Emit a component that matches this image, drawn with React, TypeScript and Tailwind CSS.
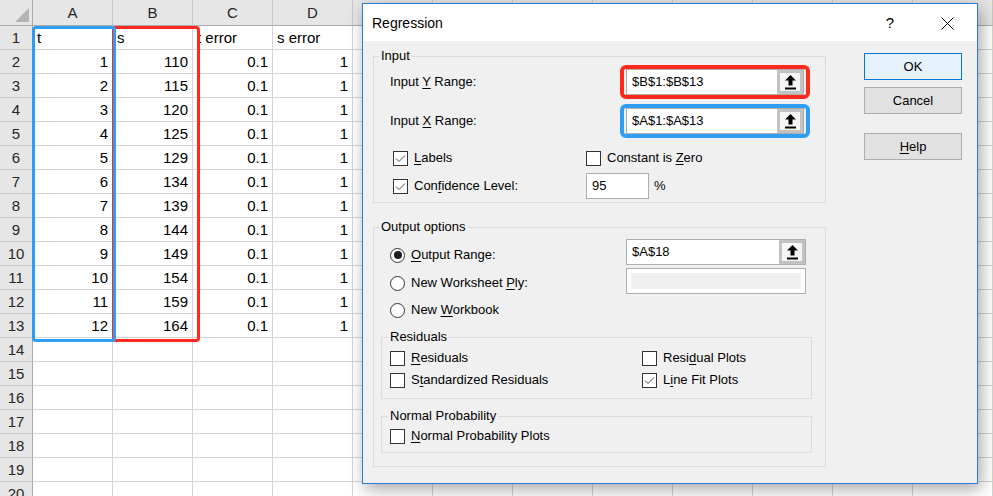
import type { ReactNode } from 'react';

const COLS = ['A', 'B', 'C', 'D', 'E', 'F', 'G', 'H', 'I', 'J', 'K', 'L'];

const sValues = [110, 115, 120, 125, 129, 134, 139, 144, 149, 154, 159, 164];

// cell contents per row (only A-D have data)
function cellsFor(row: number): { text: string; right: boolean }[] {
  if (row === 1) {
    return [
      { text: 't', right: false },
      { text: 's', right: false },
      { text: 't error', right: false },
      { text: 's error', right: false },
    ];
  }
  if (row >= 2 && row <= 13) {
    return [
      { text: String(row - 1), right: true },
      { text: String(sValues[row - 2]), right: true },
      { text: '0.1', right: true },
      { text: '1', right: true },
    ];
  }
  return [];
}

function Sheet() {
  const rows = Array.from({ length: 20 }, (_, i) => i + 1);
  return (
    <div className="flex flex-col text-[15px] text-black">
      {/* column headers */}
      <div className="flex h-[26px]">
        <div className="relative w-[33px] shrink-0 bg-[#e6e6e6] border-r border-b border-[#ababab]">
          <svg className="absolute right-[3px] bottom-[3px]" width="14" height="14" viewBox="0 0 14 14">
            <polygon points="14,0 14,14 0,14" fill="#b4b4b4" />
          </svg>
        </div>
        {COLS.map((c) => (
          <div
            key={c}
            className="w-[80px] shrink-0 bg-[#e6e6e6] border-r border-r-[#c8c8c8] border-b border-b-[#ababab] text-center leading-[25px] text-[#262626]"
          >
            {c}
          </div>
        ))}
      </div>

      {rows.map((r) => {
        const cells = cellsFor(r);
        return (
          <div key={r} className="flex h-[24px]">
            <div className="w-[33px] shrink-0 bg-[#e6e6e6] border-r border-r-[#ababab] border-b border-b-[#c8c8c8] text-center leading-[23px] text-[#262626]">
              {r}
            </div>
            {COLS.map((c, i) => {
              const cell = cells[i];
              return (
                <div
                  key={c}
                  className={
                    'w-[80px] shrink-0 overflow-hidden whitespace-nowrap border-r border-b border-[#d4d4d4] leading-[23px] ' +
                    (cell && cell.right ? 'text-right pr-[4px]' : 'text-left pl-[4px]')
                  }
                >
                  {cell ? cell.text : ''}
                </div>
              );
            })}
          </div>
        );
      })}
    </div>
  );
}

function UploadArrow() {
  return (
    <svg width="11" height="15" viewBox="0 0 11 15">
      <path d="M5.5 0 L11 5.5 H7.5 V10.5 H3.5 V5.5 H0 Z" fill="#000" />
      <rect x="0" y="12.5" width="11" height="2" fill="#000" />
    </svg>
  );
}

function RangeInput({ value, width = 178 }: { value: string; width?: number }) {
  return (
    <div
      className={
        'flex h-[26px] border border-[#adadad] bg-white ' + (width === 180 ? 'w-[180px]' : 'w-[178px]')
      }
    >
      <div className="flex-1 pl-[5px] leading-[24px]">{value}</div>
      <div className="w-[26px] h-full bg-[#c2c2c2] p-[3px]">
        <div className="flex h-full w-full items-center justify-center bg-[#f6f6f6]">
          <UploadArrow />
        </div>
      </div>
    </div>
  );
}

function Checkbox({ checked = false }: { checked?: boolean }) {
  return (
    <div className="h-[15px] w-[15px] shrink-0 border border-[#333] bg-white">
      {checked && (
        <svg width="13" height="13" viewBox="0 0 13 13">
          <polyline points="2,6.5 5,9.5 11,3.5" fill="none" stroke="#4a4a4a" strokeWidth="1" />
        </svg>
      )}
    </div>
  );
}

function Radio({ checked = false }: { checked?: boolean }) {
  return (
    <div className="flex h-[15px] w-[15px] shrink-0 items-center justify-center rounded-full border border-[#333] bg-white">
      {checked && <div className="h-[8px] w-[8px] rounded-full bg-[#1e1e1e]" />}
    </div>
  );
}

function Key({ children }: { children: ReactNode }) {
  return <span className="underline underline-offset-2 decoration-1">{children}</span>;
}

function CheckItem({ checked, children }: { checked?: boolean; children: ReactNode }) {
  return (
    <div className="flex items-center gap-[6px]">
      <Checkbox checked={checked} />
      <span>{children}</span>
    </div>
  );
}

function Dialog() {
  return (
    <div className="absolute left-[362px] top-[3px] flex h-[481px] w-[616px] flex-col border border-[#2b7bd6] bg-[#f0f0f0] text-[13px] text-black shadow-[3px_5px_16px_rgba(0,0,0,0.35)]">
      {/* title bar */}
      <div className="flex h-[37px] shrink-0 items-center bg-white pt-[2px]">
        <span className="flex-1 pl-[9px] text-[14px]">Regression</span>
        <span className="mr-[19px] w-[30px] text-center text-[15px]">?</span>
        <span className="mr-[7px] flex w-[46px] items-center justify-center">
          <svg width="13" height="13" viewBox="0 0 13 13">
            <path d="M0.5 0.5 L12.5 12.5 M12.5 0.5 L0.5 12.5" stroke="#000" strokeWidth="1" />
          </svg>
        </span>
      </div>

      {/* body */}
      <div className="flex flex-1 pl-[10px] pt-[7px]">
        <div className="flex w-[453px] flex-col">
          {/* Input */}
          <fieldset className="border border-[#dcdcdc] pb-[3px]">
            <legend className="ml-[5px] px-[2px] leading-[16px]">Input</legend>
            <div className="mt-[1px] flex h-[34px] items-center pl-[16px] pr-[15px]">
              <span className="flex-1">
                Input <Key>Y</Key> Range:
              </span>
              <div className="rounded-[6px] border-4 border-[#ff2a1d] px-[2px]">
                <RangeInput value="$B$1:$B$13" />
              </div>
            </div>
            <div className="mt-[5px] flex h-[34px] items-center pl-[16px] pr-[15px]">
              <span className="flex-1">
                Input <Key>X</Key> Range:
              </span>
              <div className="rounded-[6px] border-4 border-[#2e9df4] px-[2px]">
                <RangeInput value="$A$1:$A$13" />
              </div>
            </div>
            <div className="mt-[10px] flex h-[20px] items-center pl-[19px]">
              <div className="w-[193px]">
                <CheckItem checked>
                  <Key>L</Key>abels
                </CheckItem>
              </div>
              <CheckItem>
                Constant is <Key>Z</Key>ero
              </CheckItem>
            </div>
            <div className="mt-[5px] flex h-[26px] items-center pl-[19px]">
              <div className="w-[193px]">
                <CheckItem checked>
                  Con<Key>f</Key>idence Level:
                </CheckItem>
              </div>
              <div className="h-[26px] w-[63px] border border-[#adadad] bg-white pl-[5px] leading-[24px]">95</div>
              <span className="ml-[5px]">%</span>
            </div>
          </fieldset>

          {/* Output options */}
          <fieldset className="mt-[16px] border border-[#dcdcdc] pb-[13px]">
            <legend className="ml-[5px] px-[2px] leading-[16px]">Output options</legend>
            <div className="mt-[4px] flex h-[26px] items-start pl-[16px] pr-[19px]">
              <div className="mt-[8px] flex h-[16px] flex-1 items-center gap-[6px]">
                <Radio checked />
                <span>
                  <Key>O</Key>utput Range:
                </span>
              </div>
              <RangeInput value="$A$18" width={180} />
            </div>
            <div className="mt-[3px] flex h-[26px] items-start pl-[16px] pr-[19px]">
              <div className="mt-[7px] flex h-[16px] flex-1 items-center gap-[6px]">
                <Radio />
                <span>
                  New Worksheet <Key>P</Key>ly:
                </span>
              </div>
              <div className="h-[26px] w-[180px] border border-[#adadad] bg-white p-[4px]">
                <div className="h-full w-full bg-[#f0f0f0]" />
              </div>
            </div>
            <div className="mt-[8px] flex h-[16px] items-center gap-[6px] pl-[16px]">
              <Radio />
              <span>
                New <Key>W</Key>orkbook
              </span>
            </div>

            {/* Residuals */}
            <fieldset className="ml-[7px] mr-[13px] mt-[11px] border border-[#dcdcdc] pb-[8px]">
              <legend className="ml-[6px] px-[2px] leading-[16px]">Residuals</legend>
              <div className="mt-[3px] flex h-[20px] items-center pl-[8px]">
                <div className="w-[252px]">
                  <CheckItem>
                    <Key>R</Key>esiduals
                  </CheckItem>
                </div>
                <CheckItem>
                  Resi<Key>d</Key>ual Plots
                </CheckItem>
              </div>
              <div className="mt-[2px] flex h-[20px] items-center pl-[8px]">
                <div className="w-[252px]">
                  <CheckItem>
                    S<Key>t</Key>andardized Residuals
                  </CheckItem>
                </div>
                <CheckItem checked>
                  L<Key>i</Key>ne Fit Plots
                </CheckItem>
              </div>
            </fieldset>

            {/* Normal Probability */}
            <fieldset className="ml-[7px] mr-[13px] mt-[9px] border border-[#dcdcdc] pb-[6px]">
              <legend className="ml-[6px] px-[2px] leading-[16px]">Normal Probability</legend>
              <div className="mt-[2px] flex h-[20px] items-center pl-[8px]">
                <CheckItem>
                  <Key>N</Key>ormal Probability Plots
                </CheckItem>
              </div>
            </fieldset>
          </fieldset>
        </div>

        {/* buttons */}
        <div className="ml-[38px] flex w-[98px] flex-col pt-[5px]">
          <div className="flex h-[27px] items-center justify-center border border-[#0078d7] bg-[#e5f1fb]">OK</div>
          <div className="mt-[7px] flex h-[27px] items-center justify-center border border-[#adadad] bg-[#e1e1e1]">
            Cancel
          </div>
          <div className="mt-[19px] flex h-[27px] items-center justify-center border border-[#adadad] bg-[#e1e1e1]">
            <span>
              <Key>H</Key>elp
            </span>
          </div>
        </div>
      </div>
    </div>
  );
}

export default function App() {
  return (
    <div className="relative h-[496px] w-[993px] overflow-hidden bg-white font-['Liberation_Sans',Arial,sans-serif]">
      <Sheet />
      {/* range highlight boxes */}
      <div className="absolute left-[112px] top-[26px] h-[316px] w-[88px] rounded-[4px] border-[3px] border-[#ff2a1d]" />
      <div className="absolute left-[32px] top-[26px] h-[316px] w-[84px] rounded-[4px] border-[3px] border-[#2e9df4]" />
      <Dialog />
    </div>
  );
}
